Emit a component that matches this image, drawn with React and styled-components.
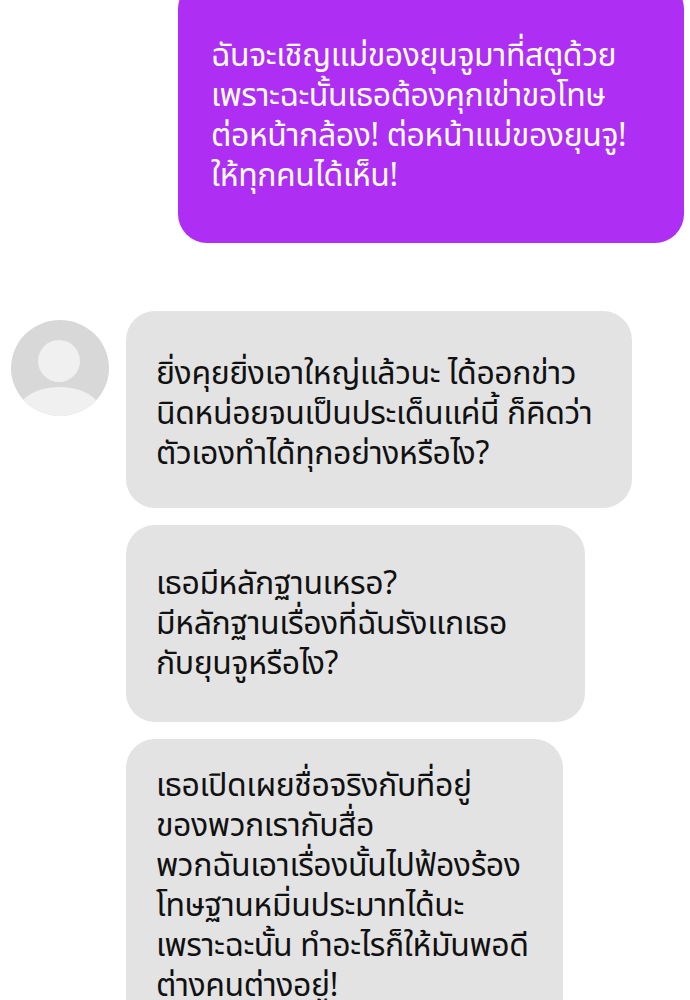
import styled, { createGlobalStyle } from "styled-components";

const GlobalStyle = createGlobalStyle`
  html, body {
    margin: 0;
    padding: 0;
    background: #fff;
  }
  body {
    font-family: "Noto Sans", "Noto Sans Thai", "Liberation Sans", sans-serif;
  }
`;

const Page = styled.div`
  width: 690px;
  height: 1000px;
  overflow: hidden;
  display: flex;
  flex-direction: column;
`;

const SentRow = styled.div`
  display: flex;
  justify-content: flex-end;
  padding-right: 6px;
  margin-top: -20px;
`;

const Bubble = styled.div`
  box-sizing: border-box;
  width: ${(p) => p.$width}px;
  padding: ${(p) => p.$padding};
  border-radius: 29px;
  background: ${(p) => (p.$sent ? "#ae2ef3" : "#e3e3e3")};
  color: ${(p) => (p.$sent ? "#fff" : "#111")};
  font-size: 32px;
  font-weight: 400;
  line-height: 40px;
  letter-spacing: -0.4px;
`;

const Line = styled.div`
  white-space: nowrap;
`;

const Thread = styled.div`
  display: flex;
  gap: 17px;
  margin-top: 68px;
  padding-left: 10px;
`;

const Avatar = styled.svg`
  flex: none;
  width: 100px;
  height: 98px;
  margin-top: 9px;
  margin-right: -1px;
`;

const Stack = styled.div`
  display: flex;
  flex-direction: column;
  gap: 17px;
`;

const messages = [
  {
    width: 506,
    padding: "41px 20px 36px 30px",
    lines: [
      "ยิ่งคุยยิ่งเอาใหญ่แล้วนะ ได้ออกข่าว",
      "นิดหน่อยจนเป็นประเด็นแค่นี้ ก็คิดว่า",
      "ตัวเองทำได้ทุกอย่างหรือไง?",
    ],
  },
  {
    width: 459,
    padding: "37px 20px 40px 30px",
    lines: ["เธอมีหลักฐานเหรอ?", "มีหลักฐานเรื่องที่ฉันรังแกเธอ", "กับยุนจูหรือไง?"],
  },
  {
    width: 437,
    padding: "25px 20px 40px 30px",
    lines: [
      "เธอเปิดเผยชื่อจริงกับที่อยู่",
      "ของพวกเรากับสื่อ",
      "พวกฉันเอาเรื่องนั้นไปฟ้องร้อง",
      "โทษฐานหมิ่นประมาทได้นะ",
      "เพราะฉะนั้น ทำอะไรก็ให้มันพอดี",
      "ต่างคนต่างอยู่!",
    ],
  },
];

export default function App() {
  return (
    <Page>
      <GlobalStyle />
      <SentRow>
        <Bubble $sent $width={506} $padding="54px 20px 49px 33px">
          <Line>ฉันจะเชิญแม่ของยุนจูมาที่สตูด้วย</Line>
          <Line>เพราะฉะนั้นเธอต้องคุกเข่าขอโทษ</Line>
          <Line>ต่อหน้ากล้อง! ต่อหน้าแม่ของยุนจู!</Line>
          <Line>ให้ทุกคนได้เห็น!</Line>
        </Bubble>
      </SentRow>
      <Thread>
        <Avatar viewBox="0 0 100 98">
          <defs>
            <clipPath id="avatar-clip">
              <ellipse cx="50" cy="48" rx="49" ry="48" />
            </clipPath>
          </defs>
          <ellipse cx="50" cy="48" rx="49" ry="48" fill="#d8d8d8" />
          <g clipPath="url(#avatar-clip)">
            <circle cx="49" cy="41" r="21" fill="#f0f0f0" />
            <ellipse cx="49.5" cy="91" rx="41" ry="24" fill="#f0f0f0" />
          </g>
        </Avatar>
        <Stack>
          {messages.map((m) => (
            <Bubble key={m.width} $width={m.width} $padding={m.padding}>
              {m.lines.map((l) => (
                <Line key={l}>{l}</Line>
              ))}
            </Bubble>
          ))}
        </Stack>
      </Thread>
    </Page>
  );
}
